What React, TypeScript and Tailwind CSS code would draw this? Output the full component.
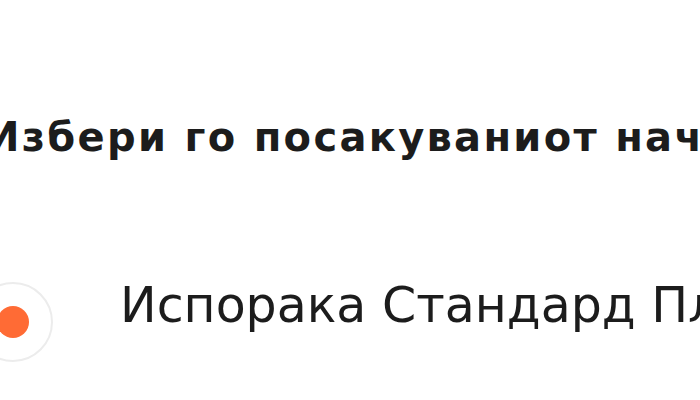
export default function App() {
  return (
    <div className="w-[700px] h-[400px] overflow-hidden bg-white text-[#1c1c1c] font-['DejaVu_Sans',sans-serif]">
      <div className="pt-[107px] ml-[-14px] whitespace-nowrap">
        <h1 className="text-[40px] leading-[60px] font-bold tracking-[2.3px]">
          Избери го посакуваниот начин на испорака
        </h1>
      </div>
      <div className="mt-[115px] ml-[-27px] flex items-start gap-[67px] whitespace-nowrap">
        <div className="w-[80px] h-[80px] shrink-0 rounded-full border-2 border-[#ececec] flex items-center justify-center">
          <div className="w-[32px] h-[32px] rounded-full bg-[#ff6b35]" />
        </div>
        <span className="mt-[-16px] text-[49px] leading-[80px] font-normal">
          Испорака Стандард Плус
        </span>
      </div>
    </div>
  );
}
